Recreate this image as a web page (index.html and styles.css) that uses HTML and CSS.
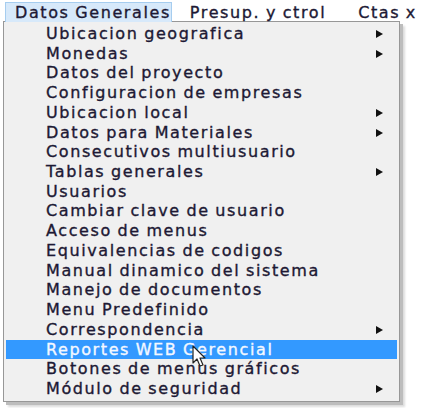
FILE: index.html
```html
<!DOCTYPE html>
<html lang="es">
<head>
<meta charset="UTF-8">
<title>Datos Generales</title>
<link rel="stylesheet" href="styles.css">
</head>
<body>
    <div class="menubar">
        <span class="top-item open">Datos Generales</span>
        <span class="top-item">Presup. y ctrol</span>
        <span class="top-item">Ctas x</span>
    </div>

    <ul class="dropdown">
        <li class="sub">Ubicacion geografica</li>
        <li class="sub">Monedas</li>
        <li>Datos del proyecto</li>
        <li>Configuracion de empresas</li>
        <li class="sub">Ubicacion local</li>
        <li class="sub">Datos para Materiales</li>
        <li>Consecutivos multiusuario</li>
        <li class="sub">Tablas generales</li>
        <li>Usuarios</li>
        <li>Cambiar clave de usuario</li>
        <li>Acceso de menus</li>
        <li>Equivalencias de codigos</li>
        <li>Manual dinamico del sistema</li>
        <li>Manejo de documentos</li>
        <li>Menu Predefinido</li>
        <li class="sub">Correspondencia</li>
        <li class="hover">Reportes WEB Gerencial</li>
        <li>Botones de menus gráficos</li>
        <li class="sub">Módulo de seguridad</li>
    </ul>

    <!-- puntero del raton -->
    <svg class="cursor" width="16" height="24" viewBox="0 0 16 24">
        <path d="M1 1 L1 18 L5 14 L8 21 L11 20 L8 13 L13 13 Z" fill="#fff" stroke="#222" stroke-width="1.2" stroke-linejoin="round"/>
    </svg>
</body>
</html>
```

FILE: styles.css
```css
body {
    margin: 0;
    padding: 0;
    width: 426px;
    height: 408px;
    background: #fff;
    font-family: "DejaVu Sans", Verdana, sans-serif;
    font-size: 16px;
    letter-spacing: 1.6px;
    word-spacing: -1px;
    color: #1d1934;
    -webkit-text-stroke: 0.35px #1d1934;
    position: relative;
    overflow: hidden;
}
.menubar {
    display: flex;
    height: 22px;
    align-items: stretch;
    padding-left: 5px;
    background: #fff;
}
.top-item {
    display: flex;
    align-items: center;
    padding: 0 14px 0 17px;
    margin-top: 2px;
    border: 1px solid transparent;
    white-space: nowrap;
}
.top-item.open {
    background: #d7e9fa;
    border-color: #a6cdef;
    border-bottom: none;
    box-sizing: border-box;
    width: 177px;
    padding-left: 9px;
    padding-right: 0;
}
.top-item:nth-child(3) {
    padding-left: 16px;
}
.dropdown {
    list-style: none;
    margin: -1px 0 0 3px;
    padding: 2px;
    width: 391px;
    background: #f0f0f0;
    border: 1px solid #979797;
    box-shadow: 3px 3px 0 #bdbdbd, 5px 5px 2px #dcdcdc;
}
.dropdown li {
    height: 19.72px;
    line-height: 19.72px;
    padding-left: 40px;
    position: relative;
    white-space: nowrap;
}
.dropdown li.sub::after {
    content: '';
    position: absolute;
    right: 14px;
    top: 6px;
    border-left: 7px solid #111;
    border-top: 4px solid transparent;
    border-bottom: 4px solid transparent;
}
.dropdown li.hover {
    background: #3399ff;
    color: #f4f8ff;
    -webkit-text-stroke: 0.35px #f4f8ff;
}
.cursor {
    position: absolute;
    left: 192px;
    top: 345px;
}
```
